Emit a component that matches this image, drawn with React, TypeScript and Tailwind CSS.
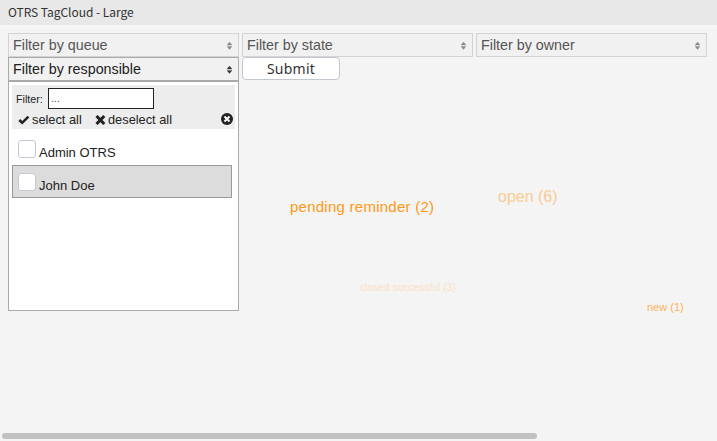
import React from "react";

function SortArrows({ color }: { color: string }) {
  return (
    <svg width="6" height="8" viewBox="0 0 6 8" fill={color} className="mt-px shrink-0">
      <path d="M3.5 0 L6 3.1 H1Z M1 4.4 H6 L3.5 7.5Z" stroke={color} strokeWidth="0.3" />
    </svg>
  );
}

function FilterSelect({ label, active = false }: { label: string; active?: boolean }) {
  return (
    <button
      className={
        "flex h-6 w-[231px] items-center justify-between border pr-[6px] pl-1 text-[14.3px] leading-[22px] " +
        (active ? "border-[#aaaaaa] bg-[#f1f1f1] text-[#212121]" : "border-[#d3d3d3] bg-[#f1f1f1] text-[#555555]")
      }
    >
      <span className="whitespace-nowrap">{label}</span>
      <SortArrows color={active ? "#333333" : "#888888"} />
    </button>
  );
}

function Option({ label, highlighted = false }: { label: string; highlighted?: boolean }) {
  return (
    <label
      className={
        "flex h-[33px] w-[220px] border pl-[5px] text-[13px] text-[#222222] " +
        (highlighted ? "border-[#999999] bg-[#dcdcdc]" : "border-transparent")
      }
    >
      <span className="mt-[7px] h-[18px] w-[18px] rounded-[3px] border border-[#c5c9d3] bg-white" />
      <span className="mt-[11px] ml-[3px] leading-[18px]">{label}</span>
    </label>
  );
}

export default function App() {
  return (
    <div className="relative flex h-[441px] w-[717px] flex-col overflow-hidden bg-[#f4f4f4] font-['Liberation_Sans',Arial,sans-serif]">
      <header className="flex h-[25px] shrink-0 items-center bg-[#e8e8e8] pb-[2px] pl-2 font-['Noto_Sans_CJK_SC',sans-serif] text-[12px] tracking-[-0.04px] text-[#333333]">
        OTRS TagCloud - Large
      </header>

      <main className="flex gap-[3px] px-2 pt-2">
        <div className="flex flex-col">
          <FilterSelect label="Filter by queue" />
          <FilterSelect label="Filter by responsible" active />
          <section className="h-[230px] w-[231px] border border-[#aaaaaa] bg-white px-[3px] pt-[3px]">
            <div className="h-11 bg-[#ededed] pt-[3px] text-[#222222]">
              <div className="flex items-center pl-1 text-[10.7px]">
                <span className="w-8 leading-[20px]">Filter:</span>
                <div className="h-[21px] w-[106px] border border-[#222222] bg-white pl-[2px] text-[11px] leading-[19px] text-[#555555]">
                  ...
                </div>
              </div>
              <div className="flex h-[20px] items-center pl-[6px] text-[12.8px]">
                <svg width="12" height="10" viewBox="0 0 12 10" className="mt-px mr-[2px]">
                  <path d="M1.3 5 L4.2 7.8 L10.4 1.6" fill="none" stroke="#222222" strokeWidth="2.6" />
                </svg>
                <span className="mt-[2px] w-[63px]">select all</span>
                <svg width="11" height="10" viewBox="0 0 11 10" className="mt-px mr-[2px]">
                  <path d="M1.5 1 L9.3 9 M9.3 1 L1.5 9" stroke="#222222" strokeWidth="3" />
                </svg>
                <span className="mt-[2px]">deselect all</span>
                <svg width="12" height="12" viewBox="0 0 12 12" className="mr-[2px] ml-auto">
                  <circle cx="6" cy="6" r="6" fill="#222222" />
                  <path d="M3.5 3.5 L8.5 8.5 M8.5 3.5 L3.5 8.5" stroke="white" strokeWidth="2" />
                </svg>
              </div>
            </div>
            <div className="pt-[3px]">
              <Option label="Admin OTRS" />
              <Option label="John Doe" highlighted />
            </div>
          </section>
        </div>
        <div className="flex flex-col items-start">
          <FilterSelect label="Filter by state" />
          <button className="h-[23px] w-[98px] rounded-[4px] border border-[#c3c7cf] bg-white font-['Noto_Sans',sans-serif] text-[14px] leading-[20px] tracking-[0.25px] text-[#333333]">
            Submit
          </button>
        </div>
        <div>
          <FilterSelect label="Filter by owner" />
        </div>
      </main>

      {/* Freely placed tags of the cloud */}
      <div className="whitespace-nowrap">
        <span className="absolute top-[197px] left-[290px] text-[15px] leading-[20px] tracking-[0.25px] text-[#ff9914]">pending reminder (2)</span>
        <span className="absolute top-[187px] left-[498px] text-[16px] leading-[20px] text-[#fbcb91]">open (6)</span>
        <span className="absolute top-[280px] left-[360px] text-[10px] leading-[16px] tracking-[0.12px] text-[#f9e0c4]">closed successful (3)</span>
        <span className="absolute top-[299px] left-[647px] text-[11px] leading-[16px] text-[#fbb25a]">new (1)</span>
      </div>

      <div className="mt-auto mb-[2px] ml-[2px] h-[6px] w-[535px] rounded-full bg-[#c1c1c1]" />
    </div>
  );
}
